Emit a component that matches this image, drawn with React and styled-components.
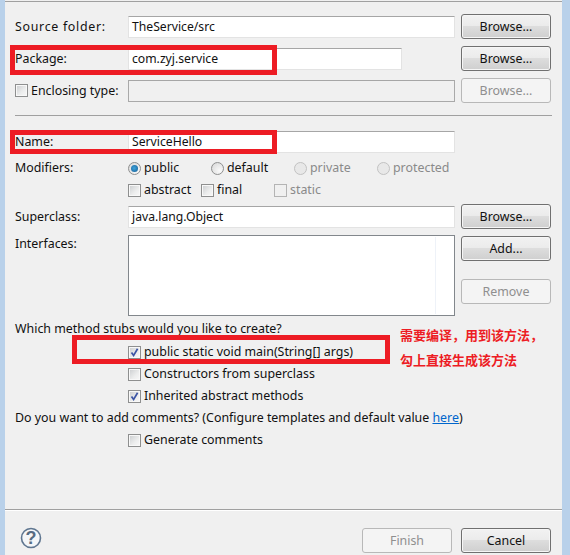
import React from "react";
import styled, { createGlobalStyle } from "styled-components";

const Global = createGlobalStyle`
  html, body { margin: 0; padding: 0; background: #f0f0f0; }
  * { box-sizing: border-box; }
`;

const Frame = styled.div`
  position: relative;
  width: 570px;
  height: 555px;
  overflow: hidden;
  background: #f0f0f0;
  border-left: 5px solid #b9d1ea;
  border-right: 8px solid #b9d1ea;
  font-family: "Noto Sans", "Noto Sans CJK SC", sans-serif;
  font-size: 12.4px;
  color: #111;
`;

const Body = styled.div`
  height: 508px;
  margin-top: 1px;
  border-top: 1px solid #a0a0a0;
  padding: 12px 10px 0;
`;

const Row = styled.div`
  display: grid;
  grid-template-columns: 107px 327px 90px;
  column-gap: 6px;
  align-items: ${(p) => p.$align || "center"};
  height: ${(p) => p.$h || 25}px;
  margin-top: ${(p) => p.$top || 0}px;
`;

const Label = styled.div`
  white-space: nowrap;
  line-height: 18px;
  letter-spacing: ${(p) => p.$spacing || 0}px;
`;

const Field = styled.div`
  height: 22px;
  line-height: 20px;
  padding-left: 3px;
  font-size: 12.2px;
  background: ${(p) => (p.$disabled ? "#f0f0f0" : "#fff")};
  border: 1px solid ${(p) => (p.$disabled ? "#a9a9a9" : "#e3e3e3")};
  border-top-color: #a6a6a6;
  ${(p) => p.$short && "width: 274px;"}
`;

const ListBox = styled.div`
  position: relative;
  height: 81px;
  background: #fff;
  border: 1px solid #82878c;
  &::after {
    content: "";
    position: absolute;
    right: 18px;
    top: 1px;
    bottom: 1px;
    width: 1px;
    background: #eef2f8;
  }
`;

const ButtonStack = styled.div`
  display: flex;
  flex-direction: column;
  gap: 18px;
  padding-top: 1px;
`;

const Button = styled.div`
  width: 90px;
  height: 25px;
  line-height: 24px;
  text-align: center;
  border-radius: 3px;
  border: 1px solid ${(p) => (p.$disabled ? "#b8b8b8" : "#707070")};
  color: ${(p) => (p.$disabled ? "#8f8f8f" : "#111")};
  background: ${(p) =>
    p.$disabled
      ? "#f4f4f4"
      : "linear-gradient(#f2f2f2 0%, #ebebeb 48%, #dddddd 50%, #cfcfcf 100%)"};
  box-shadow: inset 0 0 0 1px ${(p) => (p.$disabled ? "#f4f4f4" : "#f6f6f6")};
`;

const Divider = styled.div`
  height: 1px;
  background: #a0a0a0;
  margin-top: 12px;
`;

const Options = styled.div`
  display: flex;
  align-items: center;
  height: 22px;
`;

const Option = styled.div`
  display: flex;
  align-items: center;
  gap: 3px;
  width: ${(p) => p.$w}px;
  white-space: nowrap;
  line-height: 18px;
  color: ${(p) => (p.$disabled ? "#8a8a8a" : "inherit")};
`;

const Box = styled.span`
  flex: none;
  display: block;
  width: 13px;
  height: 13px;
  padding: 1px;
  border: 1px solid ${(p) => (p.$disabled ? "#b4b4b4" : "#8e8f8f")};
  background: ${(p) =>
    p.$disabled
      ? "#f0f0f0"
      : "linear-gradient(135deg, #cfd1d3 0%, #eceded 60%, #f6f6f6 100%) content-box, #f8f8f8"};
  svg { display: block; margin: -1px; }
`;

const Radio = styled.span`
  flex: none;
  display: flex;
  align-items: center;
  justify-content: center;
  width: 13px;
  height: 13px;
  border-radius: 50%;
  border: 1px solid ${(p) => (p.$disabled ? "#c2c2c2" : "#8e8f8f")};
  background: ${(p) =>
    p.$disabled
      ? "#e8e8e8"
      : "radial-gradient(circle at 70% 70%, #fafafa 0%, #d6d6d6 100%)"};
  &::after {
    content: "";
    display: ${(p) => (p.$checked ? "block" : "none")};
    width: 7px;
    height: 7px;
    border-radius: 50%;
    background: radial-gradient(circle at 45% 45%, #3fa4dc 0%, #155b92 100%);
  }
`;

const Line = styled.div`
  height: 22px;
  line-height: 22px;
  white-space: nowrap;
  margin-top: ${(p) => p.$top || 0}px;
`;

const Indented = styled.div`
  padding-left: 113px;
  margin-top: ${(p) => p.$top || 0}px;
`;

const Link = styled.a`
  color: #0066cc;
  text-decoration: underline;
`;

const Footer = styled.div`
  display: flex;
  align-items: center;
  justify-content: space-between;
  height: 46px;
  border-top: 1px solid #a0a0a0;
  box-shadow: inset 0 1px 0 #fff;
  padding: 15px 11px 0 15px;
`;

const Help = styled.svg`
  margin-bottom: 4px;
`;

const FooterButtons = styled.div`
  display: flex;
  gap: 9px;
`;

const Mark = styled.div`
  position: absolute;
  left: ${(p) => p.$x - 5}px;
  top: ${(p) => p.$y}px;
  width: ${(p) => p.$w}px;
  height: ${(p) => p.$h}px;
  border: 5px solid #ed1c24;
`;

const Note = styled.div`
  position: absolute;
  left: 395px;
  top: ${(p) => p.$y}px;
  color: #ed1c24;
  font-family: "Noto Sans CJK SC", sans-serif;
  font-size: 13px;
  font-weight: 700;
  line-height: 18px;
  white-space: nowrap;
`;

const Tick = () => (
  <svg width="11" height="11" viewBox="0 0 11 11">
    <path d="M2.5 5.5 L4.6 8.5 L8.6 1.8" fill="none" stroke="#3c55a5" strokeWidth="1.7" />
  </svg>
);

const Check = ({ label, checked, disabled, w }) => (
  <Option $w={w} $disabled={disabled}>
    <Box $disabled={disabled}>{checked && <Tick />}</Box>
    {label}
  </Option>
);

const RadioOption = ({ label, checked, disabled, w }) => (
  <Option $w={w} $disabled={disabled}>
    <Radio $checked={checked} $disabled={disabled} />
    {label}
  </Option>
);

const HelpIcon = () => (
  <Help width="22" height="22" viewBox="0 0 22 22">
    <circle cx="11" cy="11" r="9.5" fill="#f4f6f8" stroke="#5f7690" strokeWidth="1.6" />
    <text
      x="11"
      y="17"
      textAnchor="middle"
      fontFamily="Liberation Sans, sans-serif"
      fontSize="18"
      fontWeight="700"
      fill="#566b82"
    >
      ?
    </text>
  </Help>
);

const App = () => (
  <Frame>
    <Global />
    <Body>
      <Row>
        <Label $spacing={0.7}>Source folder:</Label>
        <Field>TheService/src</Field>
        <Button>Browse...</Button>
      </Row>
      <Row $top={7}>
        <Label>Package:</Label>
        <Field $short>com.zyj.service</Field>
        <Button>Browse...</Button>
      </Row>
      <Row $top={7}>
        <Check label="Enclosing type:" w={107} />
        <Field $disabled />
        <Button $disabled>Browse...</Button>
      </Row>
      <Divider />
      <Row $top={14} $h={24}>
        <Label>Name:</Label>
        <Field>ServiceHello</Field>
      </Row>
      <Row $top={3} $h={22}>
        <Label>Modifiers:</Label>
        <Options>
          <RadioOption label="public" checked w={83} />
          <RadioOption label="default" w={83} />
          <RadioOption label="private" disabled w={83} />
          <RadioOption label="protected" disabled w={78} />
        </Options>
      </Row>
      <Row $h={22}>
        <span />
        <Options>
          <Check label="abstract" w={73} />
          <Check label="final" w={73} />
          <Check label="static" disabled w={80} />
        </Options>
      </Row>
      <Row $top={3}>
        <Label>Superclass:</Label>
        <Field>java.lang.Object</Field>
        <Button>Browse...</Button>
      </Row>
      <Row $top={6} $h={81} $align="start">
        <Label>Interfaces:</Label>
        <ListBox />
        <ButtonStack>
          <Button>Add...</Button>
          <Button $disabled>Remove</Button>
        </ButtonStack>
      </Row>
      <Line $top={2}>Which method stubs would you like to create?</Line>
      <Indented $top={1}>
        <Options><Check label="public static void main(String[] args)" checked w={300} /></Options>
        <Options><Check label="Constructors from superclass" w={300} /></Options>
        <Options><Check label="Inherited abstract methods" checked w={300} /></Options>
      </Indented>
      <Line>
        Do you want to add comments? (Configure templates and default value <Link>here</Link>)
      </Line>
      <Indented>
        <Options><Check label="Generate comments" w={300} /></Options>
      </Indented>
    </Body>
    <Footer>
      <HelpIcon />
      <FooterButtons>
        <Button $disabled>Finish</Button>
        <Button>Cancel</Button>
      </FooterButtons>
    </Footer>
    <Mark $x={10} $y={45} $w={267} $h={30} />
    <Mark $x={10} $y={130} $w={267} $h={24} />
    <Mark $x={72} $y={335} $w={318} $h={29} />
    <Note $y={326}>需要编译，用到该方法，</Note>
    <Note $y={351}>勾上直接生成该方法</Note>
  </Frame>
);

export default App;
